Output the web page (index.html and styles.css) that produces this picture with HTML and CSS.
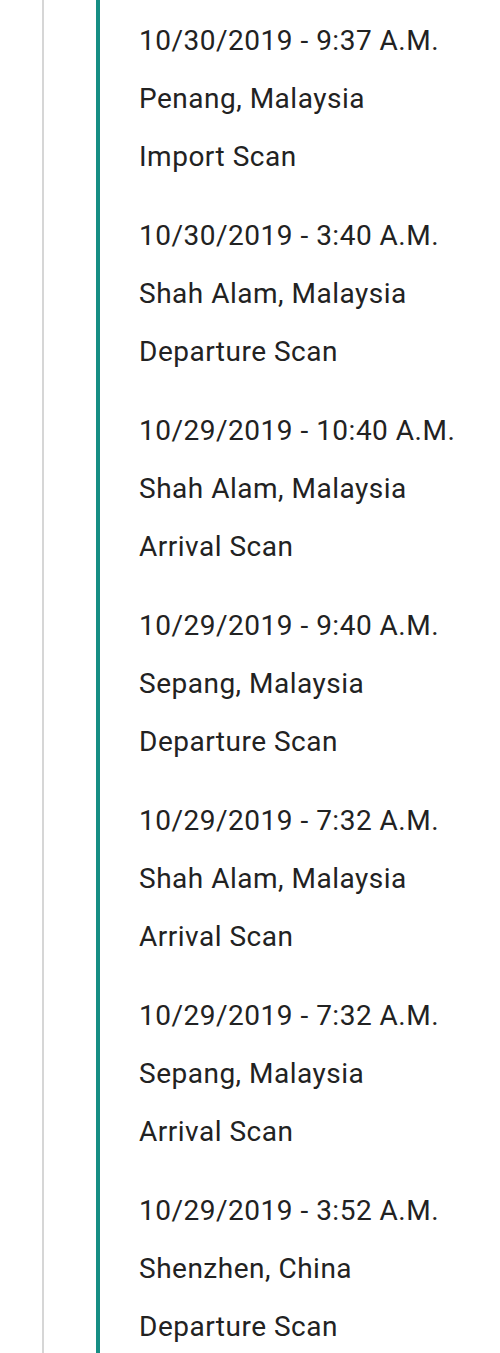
FILE: index.html
```html
<!DOCTYPE html>
<html>
<head>
<meta charset="utf-8">
<link rel="stylesheet" href="styles.css">
</head>
<body>
<div class="page">
  <div class="rail">
    <div class="timeline">
      <div class="event"><div class="line">10/30/2019 - 9:37 A.M.</div><div class="line">Penang, Malaysia</div><div class="line">Import Scan</div></div>
      <div class="event"><div class="line">10/30/2019 - 3:40 A.M.</div><div class="line">Shah Alam, Malaysia</div><div class="line">Departure Scan</div></div>
      <div class="event"><div class="line">10/29/2019 - 10:40 A.M.</div><div class="line">Shah Alam, Malaysia</div><div class="line">Arrival Scan</div></div>
      <div class="event"><div class="line">10/29/2019 - 9:40 A.M.</div><div class="line">Sepang, Malaysia</div><div class="line">Departure Scan</div></div>
      <div class="event"><div class="line">10/29/2019 - 7:32 A.M.</div><div class="line">Shah Alam, Malaysia</div><div class="line">Arrival Scan</div></div>
      <div class="event"><div class="line">10/29/2019 - 7:32 A.M.</div><div class="line">Sepang, Malaysia</div><div class="line">Arrival Scan</div></div>
      <div class="event"><div class="line">10/29/2019 - 3:52 A.M.</div><div class="line">Shenzhen, China</div><div class="line">Departure Scan</div></div>
    </div>
  </div>
</div>
</body>
</html>
```
FILE: styles.css
```css
html, body {
  margin: 0;
  padding: 0;
  background: #ffffff;
}
body {
  font-family: Roboto, "Liberation Sans", sans-serif;
  color: #222222;
  width: 500px;
  height: 1353px;
  overflow: hidden;
}
.page {
  padding-left: 42px;
  height: 1353px;
}
.rail {
  border-left: 2px solid #d6d6d6;
  padding-left: 52px;
  height: 1353px;
}
.timeline {
  border-left: 4px solid #168e84;
  padding-left: 39px;
  padding-top: 12px;
  height: 1353px;
  box-sizing: border-box;
}
.event {
  margin-bottom: 21px;
}
.line {
  font-size: 28px;
  letter-spacing: 0.5px;
  line-height: 58px;
  white-space: nowrap;
}
```
